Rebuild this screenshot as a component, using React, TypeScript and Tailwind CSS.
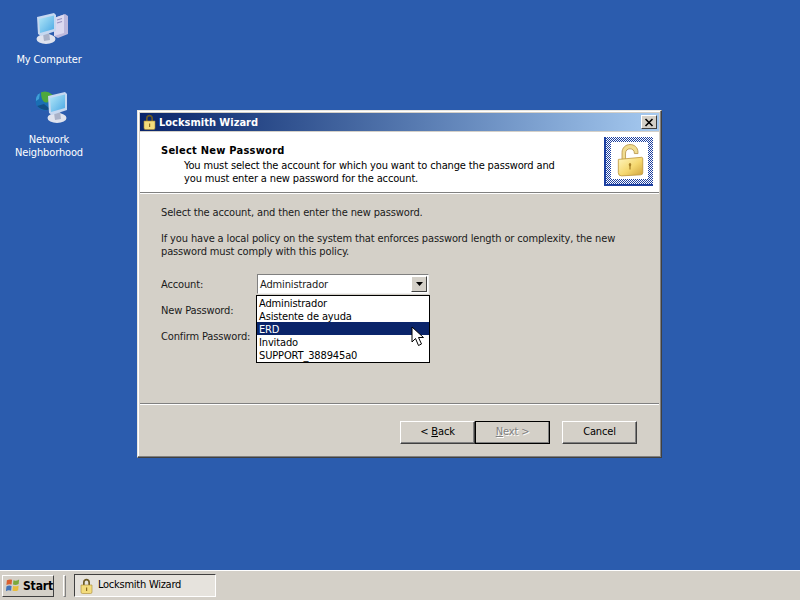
const Lock = ({ s = 32 }: { s?: number }) => (
  <svg width={s} height={s} viewBox="0 1 32 32">
    <defs>
      <linearGradient id="lg" x1="0" y1="0" x2="1" y2="1">
        <stop offset="0" stopColor="#fff6c0" />
        <stop offset="0.55" stopColor="#f5d870" />
        <stop offset="1" stopColor="#cfa23a" />
      </linearGradient>
    </defs>
    <path d="M8.5 16 V9 C8.5 4.5 12 1.5 16 1.5 s7.5 2.5 7.5 7.5 V10 h-3.4 V9.5 c0-2.4-1.8-4-4.1-4 s-4.2 1.6-4.2 4 V16z" fill="#f0dc90" stroke="#b8954a" strokeWidth="0.8" />
    <path d="M5 15.5 L27 13.5 Q28 13.5 28 15 V28 Q28 30 26 30 L8 31 Q5 31 5 28Z" fill="url(#lg)" stroke="#c09a40" strokeWidth="0.8" />
    <ellipse cx="16" cy="20.5" rx="1.2" ry="1.6" fill="#a8822a" />
    <rect x="15.4" y="21" width="1.2" height="4" fill="#a8822a" />
  </svg>
);

const SmallLock = () => (
  <svg width="13" height="16" viewBox="0 0 13 16">
    <path d="M3 8 V4.5 C3 2 4.6 0.8 6.5 0.8 S10 2 10 4.5 V8 H8.3 V4.5 C8.3 3.2 7.6 2.5 6.5 2.5 S4.7 3.2 4.7 4.5 V8Z" fill="#6b5a24" />
    <path d="M1 7 H12 V14 Q12 15.5 10.5 15.5 H2.5 Q1 15.5 1 14Z" fill="#f3dc7c" stroke="#a98a34" strokeWidth="0.6" />
    <rect x="6" y="9.5" width="1.2" height="3.5" fill="#8a6c20" />
  </svg>
);

const MonitorParts = ({ id }: { id: string }) => (
  <>
    <defs>
      <linearGradient id={id} x1="0" y1="0" x2="1" y2="1">
        <stop offset="0" stopColor="#b4e8f8" />
        <stop offset="1" stopColor="#4aa8e4" />
      </linearGradient>
    </defs>
    <ellipse cx="11" cy="27" rx="9.5" ry="5" fill="#dfe3ee" />
    <path d="M8 22 L14 20 L15 28 L9 29Z" fill="#a9b2c8" />
    <path d="M2 5 L19 1 L21 3 L21 19 L6 24 L3 22Z" fill="#c6d8f0" />
    <path d="M4 7 L19 3.5 L19 17 L5 21Z" fill={`url(#${id})`} />
  </>
);

const ComputerIcon = () => (
  <svg width="34" height="34" viewBox="0 0 34 34" className="ml-[6px]">
    <path d="M19 6 L30 2 L33 4 L33 22 L23 26 L19 24Z" fill="#bcb8dc" />
    <path d="M19 6 L29 2.5 L29 21 L19 24Z" fill="#dbd9f0" />
    <path d="M22 8 L27 6.5 M22 11 L27 9.5" stroke="#9591c0" strokeWidth="1.2" />
    <MonitorParts id="m1" />
  </svg>
);

const NetworkIcon = () => (
  <svg width="34" height="34" viewBox="0 0 34 34" className="ml-[6px]">
    <defs>
      <clipPath id="globe">
        <circle cx="10" cy="11" r="9.5" />
      </clipPath>
    </defs>
    <circle cx="10" cy="11" r="9.5" fill="#1a6fb4" />
    <g clipPath="url(#globe)">
      <path d="M6 2 C10 -1 17 1 19 6 L13 12 C9 14 6 10 6 2Z" fill="#4fa83c" />
      <path d="M1 5 L5 3 L4 9 L1 11Z" fill="#3f9fd8" />
      <path d="M2 16 C6 20 12 21 15 19 L9 14Z" fill="#134f86" />
    </g>
    <g transform="translate(11 1)">
      <MonitorParts id="m2" />
    </g>
  </svg>
);

const btn =
  "h-[23px] w-[75px] flex items-center justify-center bg-[#d4d0c8] text-[11px] border border-t-white border-l-white border-r-[#404040] border-b-[#404040] shadow-[inset_-1px_-1px_0_#808080]";

export default function App() {
  return (
    <div
      className="w-[800px] h-[600px] relative overflow-hidden bg-[#2b5cae] flex flex-col text-black tracking-[-0.14px]"
      style={{ fontFamily: '"DejaVu Sans Condensed", "DejaVu Sans", sans-serif' }}
    >
      <div className="flex-1 relative">
        <div className="absolute left-[9px] top-[12px] w-[80px] flex flex-col items-center text-white text-[11px] leading-[13px]">
          <ComputerIcon />
          <div className="mt-[7px]">My Computer</div>
        </div>
        <div className="absolute left-[9px] top-[90px] w-[80px] flex flex-col items-center text-white text-[11px] leading-[13px] text-center">
          <NetworkIcon />
          <div className="mt-[9px]">
            Network
            <br />
            Neighborhood
          </div>
        </div>

        <div className="absolute left-[137px] top-[110px] w-[525px] h-[348px] bg-[#d4d0c8] border border-t-[#e8e6e0] border-l-[#e8e6e0] border-r-[#404040] border-b-[#404040] p-[2px] flex flex-col shadow-[inset_-1px_-1px_0_#808080,inset_1px_1px_0_#fff]">
          <div className="h-[18px] shrink-0 flex items-center pl-[3px] pr-[2px] bg-gradient-to-r from-[#0a246a] to-[#a6caf0] text-white font-bold text-[11px] tracking-normal">
            <SmallLock />
            <span className="ml-[3px] flex-1 pt-[2px]">Locksmith Wizard</span>
            <div className="w-[16px] h-[14px] bg-[#d4d0c8] border border-t-white border-l-white border-r-[#404040] border-b-[#404040] flex items-center justify-center">
              <svg width="10" height="9" viewBox="0 0 10 9">
                <path d="M1.5 1 L8.5 8 M8.5 1 L1.5 8" stroke="#000" strokeWidth="1.6" />
              </svg>
            </div>
          </div>

          <div className="h-[61px] shrink-0 mt-[1px] bg-white flex border-b border-b-[#808080] relative">
            <div className="pl-[21px] pt-[12px] flex-1">
              <div className="font-bold text-[11px] leading-[14px] tracking-[0.25px]">Select New Password</div>
              <div className="pl-[23px] text-[11px] leading-[13px] mt-[1px]">
                You must select the account for which you want to change the password and
                <br />
                you must enter a new password for the account.
              </div>
            </div>
            <div className="w-[49px] h-[49px] mt-[5px] mr-[6px] p-[5px] bg-[repeating-conic-gradient(#1c3fa0_0_25%,#ffffff_0_50%)] bg-[length:2px_2px] border-l-2 border-b-2 border-[#1c3fa0]">
              <div className="w-full h-full bg-white flex items-center justify-center">
                <Lock s={34} />
              </div>
            </div>
          </div>
          <div className="h-px shrink-0 bg-white" />

          <div className="flex-1 flex flex-col text-[11px] leading-[13px] pt-[12px] pl-[21px] pr-[21px] text-[#1a1a1a]">
            <div>Select the account, and then enter the new password.</div>
            <div className="mt-[13px] whitespace-nowrap">
              If you have a local policy on the system that enforces password length or complexity, the new
              <br />
              password must comply with this policy.
            </div>
            <div className="mt-[16px] relative flex flex-col">
              <div className="flex items-center h-[20px]">
                <div className="w-[96px]">Account:</div>
                <div className="w-[172px] h-[20px] bg-white border border-t-[#808080] border-l-[#808080] border-r-[#f0f0f0] border-b-[#f0f0f0] flex items-center pl-[2px] justify-between">
                  <span>Administrador</span>
                  <div className="w-[16px] h-[16px] mr-[1px] bg-[#d4d0c8] border border-t-white border-l-white border-r-[#404040] border-b-[#404040] flex items-center justify-center">
                    <svg width="7" height="4" viewBox="0 0 7 4">
                      <path d="M0 0H7L3.5 4Z" fill="#000" />
                    </svg>
                  </div>
                </div>
              </div>
              <div className="flex items-center h-[20px] mt-[6px]">
                <div className="w-[95px] whitespace-nowrap">New Password:</div>
              </div>
              <div className="flex items-center h-[20px] mt-[6px]">
                <div className="w-[95px] whitespace-nowrap">Confirm Password:</div>
              </div>

              <div className="absolute left-[95px] top-[21px] w-[174px] h-[68px] bg-white border border-black text-black leading-[15px]">
                <div className="h-[13px] pl-[2px]">Administrador</div>
                <div className="h-[13px] pl-[2px]">Asistente de ayuda</div>
                <div className="h-[13px] pl-[2px] bg-[#0a246a] text-white">ERD</div>
                <div className="h-[13px] pl-[2px]">Invitado</div>
                <div className="h-[13px] pl-[2px]">SUPPORT_388945a0</div>
              </div>
              <svg className="absolute left-[250px] top-[52px]" width="15" height="21" viewBox="0 0 15 21">
                <path d="M1 1 V16 L4.5 12.5 L7.5 19.5 L10.5 18 L7.5 11.5 H12.5 Z" fill="#fff" stroke="#000" strokeWidth="1" />
              </svg>
            </div>
            <div className="flex-1" />
          </div>

          <div className="h-[2px] shrink-0 border-t border-t-[#808080] border-b border-b-white" />
          <div className="h-[50px] shrink-0 flex justify-end pt-[16px] pr-[22px]">
            <div className={btn}>
              <span>
                &lt; <u>B</u>ack
              </span>
            </div>
            <div className={btn + " text-[#808080] [text-shadow:1px_1px_0_#fff] !border-black"}>
              <span>
                <u>N</u>ext &gt;
              </span>
            </div>
            <div className={btn + " ml-[12px]"}>Cancel</div>
          </div>
        </div>
      </div>

      <div className="h-[30px] shrink-0 bg-[#d4d0c8] border-t border-t-white flex items-center text-[11px] pl-[2px]">
        <div className="w-[52px] h-[22px] flex items-center pl-[2px] font-bold text-[12px] border border-t-white border-l-white border-r-[#404040] border-b-[#404040]">
          <svg width="17" height="15" viewBox="0 0 17 15" className="mr-[2px]">
            <path d="M2 2 Q5 0.5 7.5 1.5 L7 6.5 Q4 5.5 1.5 7Z" fill="#d9602f" />
            <path d="M9 2 Q12 3 15 1 L14.5 6 Q11.5 7.5 8.5 6.5Z" fill="#7aa83a" />
            <path d="M1.5 8.5 Q4 7 7 8 L6.5 13 Q3.5 12 1 13.5Z" fill="#4173b8" />
            <path d="M8.5 8 Q11.5 9 14.5 7.5 L14 12.5 Q11 14 8 13Z" fill="#e8bc3a" />
          </svg>
          <span>Start</span>
        </div>
        <div className="w-[3px] h-[22px] ml-[9px] border border-t-white border-l-white border-r-[#808080] border-b-[#808080]" />
        <div className="w-[142px] h-[23px] ml-[8px] flex items-center pl-[5px] bg-[#e6e3dd] border border-t-[#404040] border-l-[#404040] border-r-white border-b-white">
          <SmallLock />
          <span className="ml-[5px] tracking-[-0.25px]">Locksmith Wizard</span>
        </div>
      </div>
    </div>
  );
}
